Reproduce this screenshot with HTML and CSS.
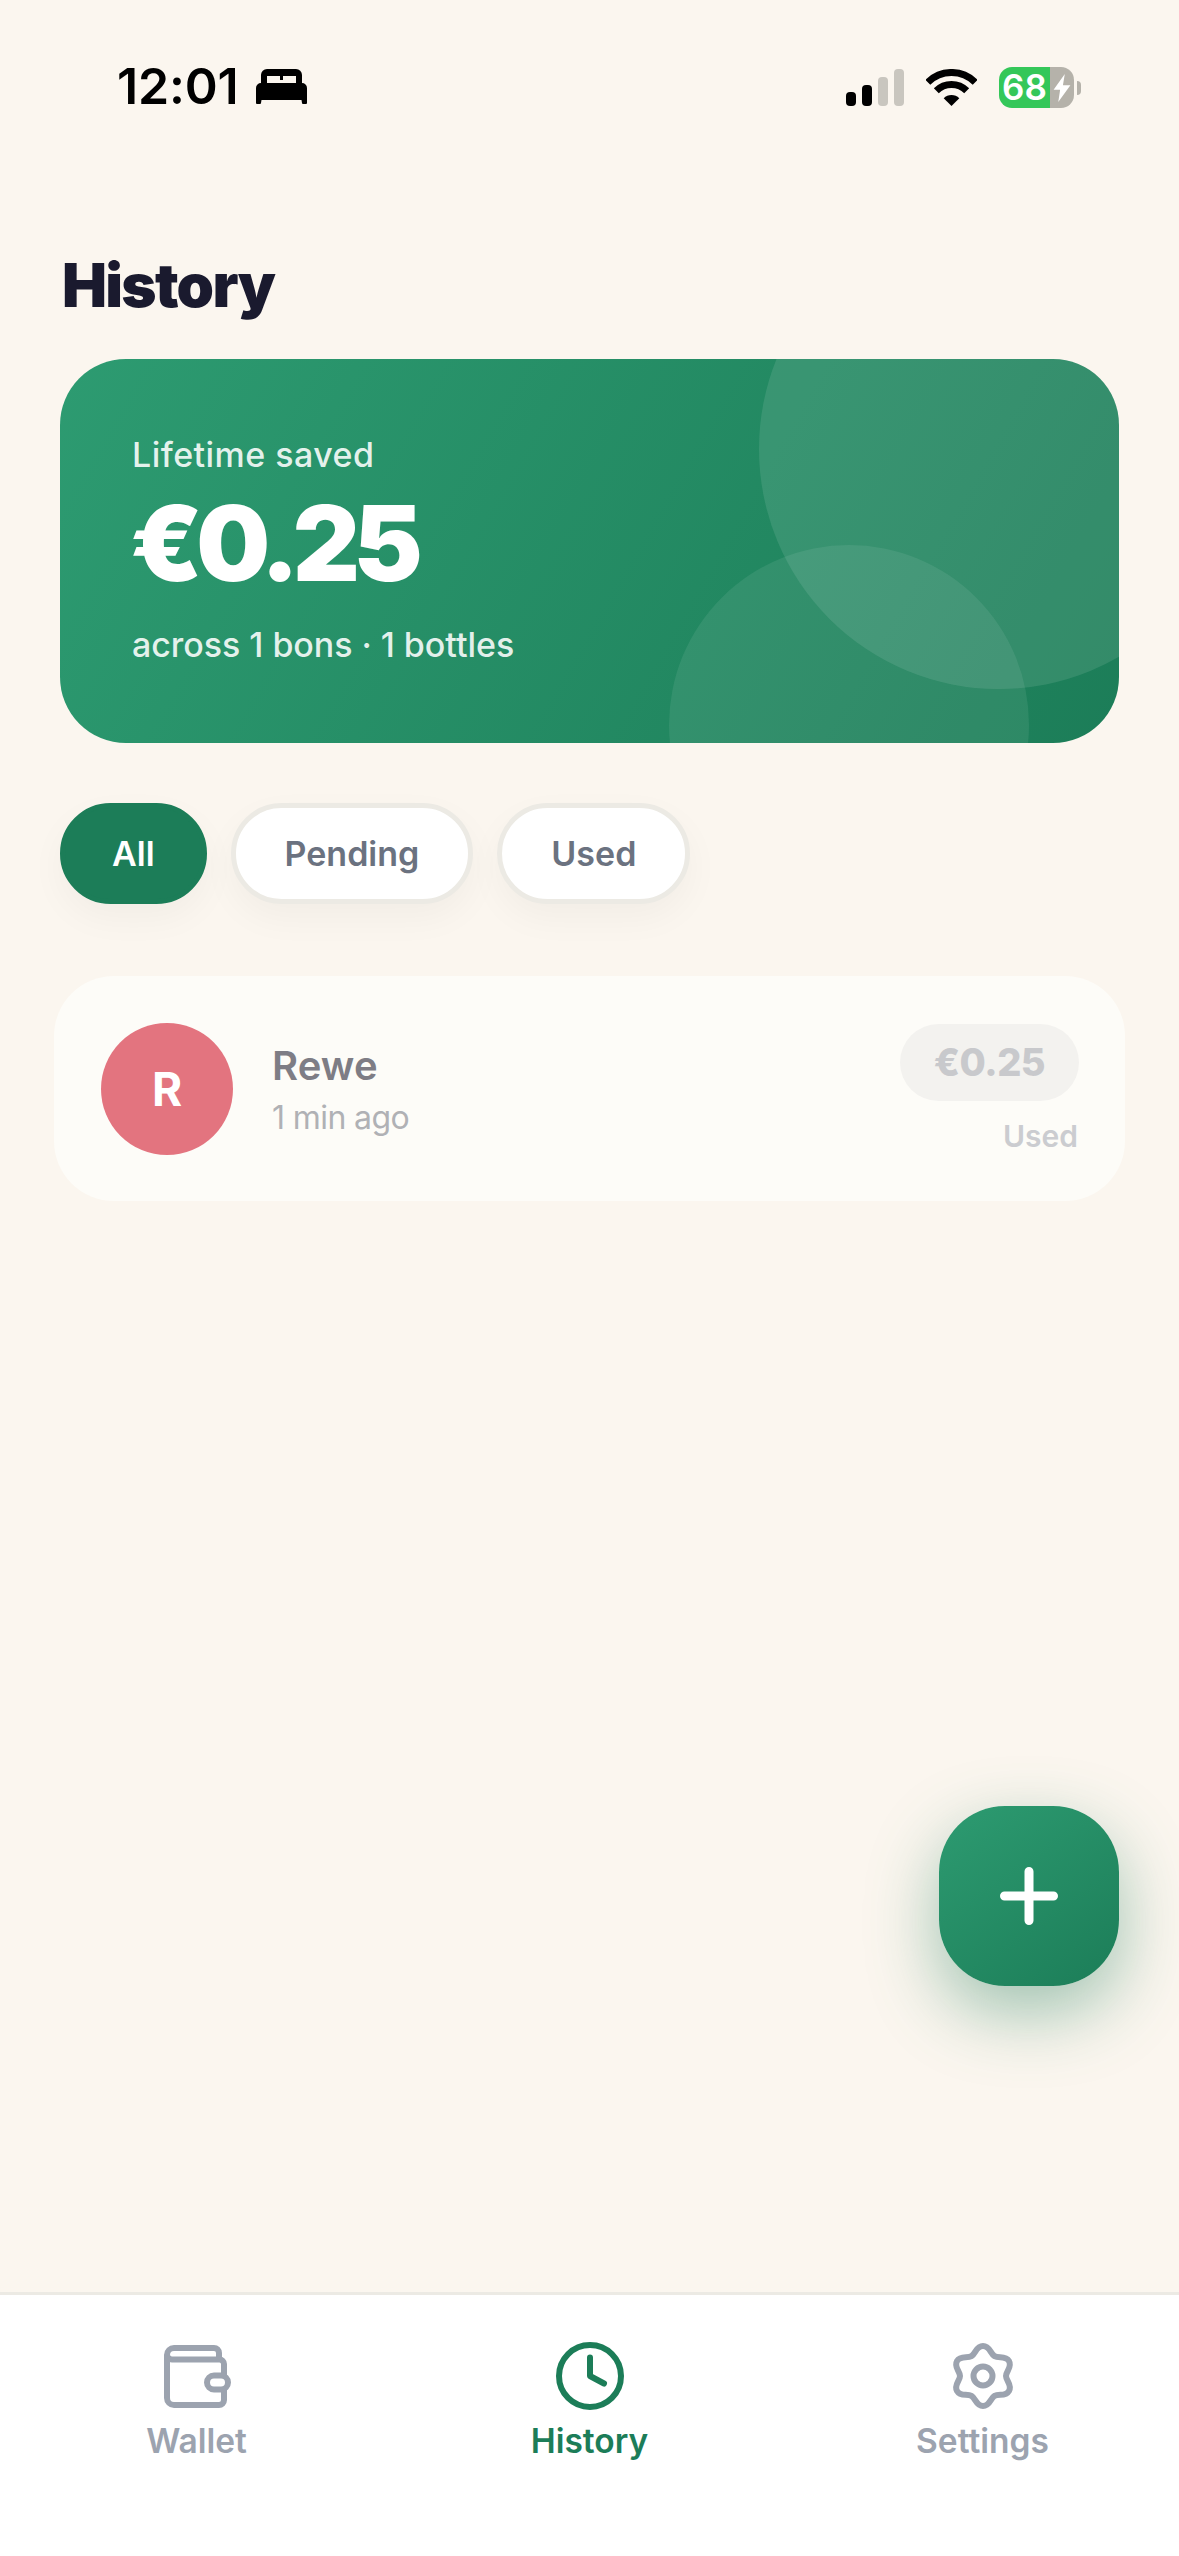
FILE: index.html
```html
<!DOCTYPE html>
<html lang="en">
<head>
<meta charset="utf-8">
<title>History</title>
<link rel="stylesheet" href="styles.css">
</head>
<body>
<div class="app">
  <main class="main">
    <header class="status">
      <div class="status-left">
        <span class="clock-time">12:01</span>
        <svg class="bed" viewBox="0 0 51 36" width="51" height="36"><path fill-rule="evenodd" d="M5 15V7a6 6 0 0 1 6-6h29a6 6 0 0 1 6 6v8h-6V8h-13v4h-3V8H11v7z"/><path d="M0 20a5 5 0 0 1 5-5h41a5 5 0 0 1 5 5v15a1 1 0 0 1-1 1h-3a1 1 0 0 1-1-1l-.5-3H5.500L5 35a1 1 0 0 1-1 1H1a1 1 0 0 1-1-1z"/></svg>
      </div>
      <div class="status-right">
        <svg class="signal" viewBox="0 0 58 37" width="58" height="37"><rect x="0" y="23" width="10" height="14" rx="4"/><rect x="16" y="16" width="10" height="21" rx="4"/><rect class="off" x="32" y="8" width="10" height="29" rx="4"/><rect class="off" x="48" y="0" width="10" height="37" rx="4"/></svg>
        <svg class="wifi" viewBox="0 0 51 37" width="51" height="37"><path class="arc" d="M1.800 13.300A33.500 33.500 0 0 1 49.200 13.300"/><path class="arc" d="M10.300 21.800A21.500 21.500 0 0 1 40.700 21.800"/><path d="M25.500 37L17.700 29.200A11 11 0 0 1 33.300 29.200Z"/></svg>
        <div class="battery">
          <span class="batt-fill">68</span>
          <span class="batt-rest"><svg viewBox="0 0 18 30" width="18" height="28"><path fill="#fff" d="M12 0L0 17h7l-2 13L18 12h-8z"/></svg></span>
        </div>
        <span class="batt-nub"></span>
      </div>
    </header>

    <h1 class="title">History</h1>

    <section class="hero">
      <span class="bubble bubble-a"></span>
      <span class="bubble bubble-b"></span>
      <p class="hero-label">Lifetime saved</p>
      <p class="hero-amount">€0.25</p>
      <p class="hero-sub">across 1 bons · 1 bottles</p>
    </section>

    <div class="filters">
      <button class="pill pill-active">All</button>
      <button class="pill">Pending</button>
      <button class="pill">Used</button>
    </div>

    <article class="item">
      <div class="avatar">R</div>
      <div class="item-text">
        <div class="item-name">Rewe</div>
        <div class="item-time">1 min ago</div>
      </div>
      <div class="item-side">
        <div class="amount">€0.25</div>
        <div class="state">Used</div>
      </div>
    </article>

    <button class="fab" aria-label="Add">
      <svg viewBox="0 0 58 58" width="58" height="58"><path d="M29 4.500V53.500M4.500 29H53.500"/></svg>
    </button>
  </main>

  <nav class="nav">
    <div class="tab">
      <svg class="tab-icon" viewBox="0 0 70 68" width="70" height="68"><g transform="translate(2 3)"><path d="M3 10V53a7 7 0 0 0 7 7H55a5 5 0 0 0 5-5V44.500M60 30.500V19a4.500 4.500 0 0 0-4.500-4.500H8A5 5 0 0 1 3 10A7 7 0 0 1 10 3H50a5 5 0 0 1 5 5V14.500"/><rect x="43" y="30.500" width="21" height="14" rx="7"/></g></svg>
      <span class="tab-label">Wallet</span>
    </div>
    <div class="tab tab-active">
      <svg class="tab-icon" viewBox="-35 -34 70 68" width="70" height="68"><circle r="31"/><path d="M0-18.500V0L14 7.500"/></svg>
      <span class="tab-label">History</span>
    </div>
    <div class="tab">
      <svg class="tab-icon" viewBox="-35 -34 70 68" width="70" height="68"><path d="M0-30C7-30 7.170-22.420 11.500-19.920C15.830-17.420 22.480-21.060 25.980-15C29.480-8.940 23-5 23 0C23 5 29.480 8.940 25.980 15C22.480 21.060 15.830 17.420 11.500 19.920C7.170 22.420 7 30 0 30C-7 30-7.170 22.420-11.500 19.920C-15.830 17.420-22.480 21.060-25.980 15C-29.480 8.940-23 5-23 0C-23-5-29.480-8.940-25.980-15C-22.480-21.060-15.830-17.420-11.500-19.920C-7.170-22.420-7-30 0-30Z"/><circle r="9.500"/></svg>
      <span class="tab-label">Settings</span>
    </div>
  </nav>
</div>
</body>
</html>
```

FILE: styles.css
```css
* { box-sizing: border-box; }
html, body { margin: 0; padding: 0; }
body { background: #fbf6ef; font-family: "Inter", "Liberation Sans", sans-serif; }
p, h1 { margin: 0; }

.app { width: 1179px; height: 2556px; display: flex; flex-direction: column; overflow: hidden; }
.main { position: relative; flex: 1; display: flex; flex-direction: column; padding: 0 60px; background: #fbf6ef; }

/* status bar */
.status { height: 130px; margin: 0 -60px; padding: 64px 98px 0 117px; display: flex; justify-content: space-between; align-items: flex-start; }
.status-left { display: flex; align-items: center; gap: 18px; height: 44px; }
.clock-time { font-size: 50px; line-height: 44px; font-weight: 600; color: #000; letter-spacing: -.2px; }
.bed { fill: #000; }
.status-right { display: flex; align-items: flex-start; }
.signal { fill: #000; margin-top: 5px; }
.signal .off { fill: #c9c6bf; }
.wifi { fill: #000; margin: 5px 0 0 22px; }
.wifi .arc { fill: none; stroke: #000; stroke-width: 7; }
.battery { width: 75px; height: 41px; margin: 3px 0 0 22px; border-radius: 13px; overflow: hidden; display: flex; }
.batt-fill { width: 51px; background: #34c759; color: #fff; font-size: 35px; line-height: 41px; font-weight: 600; text-align: center; letter-spacing: 0; }
.batt-rest { flex: 1; background: #b5b2aa; display: flex; align-items: center; justify-content: center; }
.batt-nub { width: 4px; height: 14px; margin: 17px 0 0 3px; background: #b5b2aa; border-radius: 0 7px 7px 0; }

/* title */
.title { margin: 119px 0 0 2px; font-size: 60px; line-height: 72px; font-weight: 900; color: #1a1a2e; letter-spacing: -1.7px; }

/* hero */
.hero { position: relative; overflow: hidden; margin-top: 38px; height: 384px; border-radius: 66px; padding: 75px 72px 0; background: linear-gradient(120deg, #2d9b71 0%, #1c7d58 100%); color: #fff; }
.bubble { position: absolute; border-radius: 50%; background: rgba(255,255,255,.1); }
.bubble-a { width: 480px; height: 480px; top: -150px; right: -120px; }
.bubble-b { width: 360px; height: 360px; top: 186px; left: 609px; background: rgba(255,255,255,.08); }
.hero-label { position: relative; font-size: 34px; line-height: 42px; font-weight: 500; color: rgba(255,255,255,.88); letter-spacing: .45px; }
.hero-amount { position: relative; margin: 11px 0 0 -2px; font-size: 104px; line-height: 112px; font-weight: 900; letter-spacing: -6.5px; }
.hero-sub { position: relative; margin-top: 25px; font-size: 34px; line-height: 42px; font-weight: 500; color: rgba(255,255,255,.88); letter-spacing: -.05px; }

/* filters */
.filters { display: flex; gap: 24px; margin-top: 60px; }
.pill { height: 101px; padding: 0 49px; border-radius: 51px; border: 5px solid #eceae4; background: #fff; color: #6b7280; font: 600 34px/1 "Inter", "Liberation Sans", sans-serif; box-shadow: 0 14px 36px rgba(0,0,0,.04); }
.pill-active { padding: 0 47px; border-color: #1c7d58; background: #1c7d58; color: #fff; }

/* list item */
.item { display: flex; align-items: center; margin: 72px -6px 0; height: 225px; padding: 0 46px 0 47px; border-radius: 60px; background: #fdfcf8; }
.avatar { width: 132px; height: 132px; border-radius: 50%; background: #e3747f; color: #fff; display: flex; align-items: center; justify-content: center; font-size: 46px; font-weight: 700; }
.item-text { flex: 1; margin-left: 39px; padding-top: 3px; }
.item-name { font-size: 40px; line-height: 48px; font-weight: 600; color: #7e7d85; letter-spacing: .1px; }
.item-time { margin-top: 8px; font-size: 32px; line-height: 40px; color: #b0b1b5; letter-spacing: -.6px; }
.item-side { display: flex; flex-direction: column; align-items: flex-end; }
.amount { width: 179px; height: 77px; border-radius: 39px; background: #f3f2ef; color: #c8c9cc; font-size: 38px; font-weight: 800; line-height: 77px; text-align: center; letter-spacing: -.5px; }
.state { margin: 17px 1px 0 0; font-size: 30px; line-height: 36px; font-weight: 600; color: #cbccd0; }

/* floating action button */
.fab { position: absolute; right: 60px; bottom: 306px; width: 180px; height: 180px; border: 0; padding: 0; border-radius: 66px; background: linear-gradient(145deg, #2d9b71, #1c7d58); box-shadow: 0 26px 70px rgba(30,125,90,.42); display: flex; align-items: center; justify-content: center; }
.fab svg { fill: none; stroke: #fff; stroke-width: 9; stroke-linecap: round; }

/* bottom nav */
.nav { height: 264px; border-top: 3px solid #eceae4; background: #fff; display: grid; grid-template-columns: repeat(3, 1fr); }
.tab { display: flex; flex-direction: column; align-items: center; padding-top: 47px; color: #9ca3af; }
.tab-icon { fill: none; stroke: currentColor; stroke-width: 6; stroke-linecap: round; stroke-linejoin: round; }
.tab-label { margin-top: 9px; font-size: 33.5px; line-height: 44px; font-weight: 600; }
.tab-active { color: #1c7d58; }
```
